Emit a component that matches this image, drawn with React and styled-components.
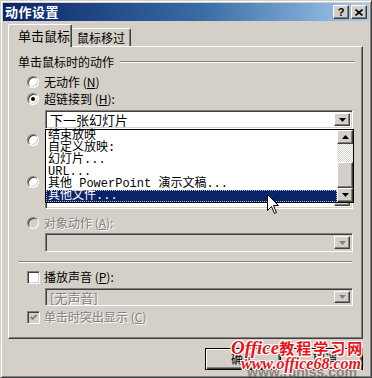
import React from "react";
import styled, { createGlobalStyle, css } from "styled-components";

const face = "#D4D0C8";
const shadow = "#808080";
const dark = "#404040";
const navy = "#0A246A";

const GlobalStyle = createGlobalStyle`
  html, body { margin: 0; padding: 0; background: ${face}; }
  body {
    font-family: "Noto Sans CJK SC", "Liberation Sans", sans-serif;
    font-size: 12px;
    color: #000;
  }
  * { box-sizing: border-box; }
`;

const raised = css`
  border: 1px solid;
  border-color: #fff ${dark} ${dark} #fff;
  box-shadow: inset -1px -1px 0 ${shadow};
`;

const sunken = css`
  border: 1px solid;
  border-color: ${shadow} #fff #fff ${shadow};
  box-shadow: inset 1px 1px 0 ${dark}, inset -1px -1px 0 ${face};
`;

const Window = styled.div`
  position: relative;
  width: 372px;
  height: 378px;
  background: ${face};
  padding: 2px;
  overflow: hidden;
  border: 1px solid;
  border-color: ${face} ${dark} ${dark} ${face};
  box-shadow: inset 1px 1px 0 #fff, inset -1px -1px 0 ${shadow};
`;

const TitleBar = styled.div`
  height: 18px;
  display: flex;
  align-items: center;
  padding: 0 2px;
  background: linear-gradient(to right, ${navy} 0%, #3a6ea5 55%, #a6caf0 100%);
`;

const Title = styled.div`
  flex: 1;
  color: #fff;
  font-weight: bold;
  font-size: 13px;
  line-height: 18px;
  letter-spacing: 0.5px;
`;

const CaptionButton = styled.div`
  width: 16px;
  height: 14px;
  margin-left: ${(p) => p.$gap || 0}px;
  background: ${face};
  ${raised}
  display: flex;
  align-items: center;
  justify-content: center;
  font-family: "Liberation Sans", sans-serif;
  font-weight: bold;
  font-size: 11px;
  line-height: 12px;
`;

const Body = styled.div`
  padding: 3px 6px 0 5px;
`;

const TabStrip = styled.div`
  display: flex;
  align-items: flex-end;
  height: 22px;
  position: relative;
  z-index: 1;
`;

const Tab = styled.div`
  height: ${(p) => (p.$active ? 23 : 18)}px;
  width: ${(p) => p.$width}px;
  margin-bottom: ${(p) => (p.$active ? -1 : 0)}px;
  padding-left: ${(p) => (p.$active ? 9 : 5)}px;
  background: ${face};
  border-top: 1px solid #fff;
  border-left: ${(p) => (p.$active ? "1px solid #fff" : "none")};
  border-right: 1px solid ${dark};
  border-radius: 2px 2px 0 0;
  box-shadow: inset -1px 0 0 ${shadow};
  font-size: ${(p) => (p.$active ? 13 : 12)}px;
  line-height: ${(p) => (p.$active ? 22 : 18)}px;
`;

const Panel = styled.div`
  position: relative;
  width: 355px;
  height: 293px;
  ${raised}
`;

const GroupHeader = styled.div`
  display: flex;
  align-items: center;
  height: 14px;
  margin-top: 8px;
  padding-left: 9px;
  line-height: 14px;
`;

const GroupRule = styled.div`
  flex: 1;
  height: 2px;
  margin: 0 7px 0 6px;
  border-top: 1px solid ${shadow};
  border-bottom: 1px solid #fff;
`;

const OptionRow = styled.div`
  display: flex;
  align-items: center;
  gap: ${(p) => (p.$check ? 4 : 5)}px;
  height: 16px;
  margin-top: ${(p) => p.$top}px;
  padding-left: 18px;
  line-height: 16px;
  color: ${(p) => (p.$disabled ? shadow : "#000")};
  text-shadow: ${(p) => (p.$disabled ? "1px 1px 0 #fff" : "none")};
`;

const Radio = styled.span`
  position: relative;
  width: 12px;
  height: 12px;
  border-radius: 50%;
  background: ${(p) => (p.$disabled ? face : "#fff")};
  border: 1px solid;
  border-color: ${shadow} #fff #fff ${shadow};
  box-shadow: inset 1px 1px 0 ${dark}, inset -1px -1px 0 ${face};
  &::after {
    content: "";
    display: ${(p) => (p.$on ? "block" : "none")};
    position: absolute;
    left: 3px;
    top: 3px;
    width: 4px;
    height: 4px;
    border-radius: 50%;
    background: #000;
  }
`;

const Check = styled.span`
  width: 13px;
  height: 13px;
  display: flex;
  align-items: center;
  justify-content: center;
  background: ${(p) => (p.$disabled ? face : "#fff")};
  ${sunken}
`;

const Field = styled.div`
  display: flex;
  width: 308px;
  height: ${(p) => p.$height || 19}px;
  margin-top: ${(p) => p.$top}px;
  margin-left: 36px;
  padding: 2px;
  background: ${(p) => (p.$disabled ? face : "#fff")};
  ${sunken}
`;

const FieldText = styled.div`
  flex: 1;
  padding-left: 2px;
  line-height: 14px;
  font-size: 13px;
  color: ${(p) => (p.$disabled ? shadow : "#000")};
  text-shadow: ${(p) => (p.$disabled ? "1px 1px 0 #fff" : "none")};
`;

const DropButton = styled.div`
  width: 16px;
  height: 100%;
  display: flex;
  align-items: center;
  justify-content: center;
  background: ${face};
  ${raised}
`;

const Separator = styled.div`
  width: 334px;
  height: 2px;
  margin: 9px 0 0 9px;
  border-top: 1px solid ${shadow};
  border-bottom: 1px solid #fff;
`;

const Popup = styled.div`
  position: absolute;
  left: 36px;
  top: 82px;
  width: 309px;
  height: 74px;
  display: flex;
  border: 1px solid #000;
  background: #fff;
  z-index: 2;
`;

const ItemList = styled.div`
  flex: 1;
`;

const Item = styled.div`
  height: 12px;
  padding-left: 2px;
  font-family: "Liberation Mono", "Noto Sans CJK SC", monospace;
  font-size: 12px;
  line-height: 12px;
  white-space: pre;
  color: ${(p) => (p.$selected ? "#fff" : "#000")};
  background: ${(p) => (p.$selected ? navy : "transparent")};
  outline: ${(p) => (p.$selected ? "1px dotted #c0c0c0" : "none")};
  outline-offset: -1px;
`;

const ScrollBar = styled.div`
  width: 16px;
  display: flex;
  flex-direction: column;
`;

const ScrollArrow = styled.div`
  height: 14px;
  display: flex;
  align-items: center;
  justify-content: center;
  background: ${face};
  ${raised}
`;

const ScrollTrack = styled.div`
  height: ${(p) => p.$size}px;
  background: repeating-conic-gradient(#fff 0 25%, ${face} 0 50%) 0 0 / 2px 2px;
`;

const ScrollThumb = styled.div`
  height: ${(p) => p.$size}px;
  background: ${face};
  ${raised}
`;

const ButtonRow = styled.div`
  display: flex;
  justify-content: flex-end;
  gap: 6px;
  margin-top: 9px;
`;

const PushButton = styled.div`
  width: 76px;
  height: 22px;
  display: flex;
  align-items: center;
  justify-content: center;
  background: ${face};
  border: 1px solid #000;
  box-shadow: inset 1px 1px 0 #fff, inset -1px -1px 0 ${dark}, inset -2px -2px 0 ${shadow};
  line-height: 16px;
`;

const Watermark = styled.div`
  position: absolute;
  left: 230px;
  top: 340px;
  z-index: 5;
  color: #e8141c;
  font-weight: bold;
  line-height: 14px;
  text-shadow: 1px 0 0 #fff, -1px 0 0 #fff, 0 1px 0 #fff, 0 -1px 0 #fff,
    1px 1px 0 #fff, -1px -1px 0 #fff, 1px -1px 0 #fff, -1px 1px 0 #fff;
`;

const MarkLine = styled.div`
  display: flex;
  align-items: baseline;
  padding-left: ${(p) => p.$indent || 0}px;
  height: ${(p) => p.$height}px;
`;

const MarkLatin = styled.span`
  font-family: "Liberation Serif", serif;
  font-style: italic;
  font-size: ${(p) => p.$size}px;
`;

const MarkCjk = styled.span`
  font-size: 15px;
  letter-spacing: 2px;
`;

const GhostMark = styled.div`
  position: absolute;
  left: 246px;
  top: 363px;
  z-index: 4;
  font-family: "Liberation Sans", sans-serif;
  font-size: 14px;
  font-weight: bold;
  color: rgba(70, 70, 70, 0.55);
`;

const Cursor = styled.svg`
  position: absolute;
  left: 266px;
  top: 193px;
  z-index: 6;
`;

const Arrow = ({ up, disabled }) => (
  <svg width="7" height="4" viewBox="0 0 7 4">
    <polygon
      points={up ? "3.5,0 7,4 0,4" : "0,0 7,0 3.5,4"}
      fill={disabled ? shadow : "#000"}
    />
  </svg>
);

const Combo = ({ text, disabled, top, height }) => (
  <Field $disabled={disabled} $top={top} $height={height}>
    <FieldText $disabled={disabled}>{text}</FieldText>
    <DropButton>
      <Arrow disabled={disabled} />
    </DropButton>
  </Field>
);

const items = [
  "结束放映",
  "自定义放映:",
  "幻灯片...",
  "URL...",
  "其他 PowerPoint 演示文稿...",
  "其他文件...",
];

export default function App() {
  return (
    <>
      <GlobalStyle />
      <Window>
        <TitleBar>
          <Title>动作设置</Title>
          <CaptionButton>?</CaptionButton>
          <CaptionButton $gap={2}>
            <svg width="8" height="7" viewBox="0 0 8 7">
              <path d="M0.5 0.5 L7.5 6.5 M7.5 0.5 L0.5 6.5" stroke="#000" strokeWidth="1.6" />
            </svg>
          </CaptionButton>
        </TitleBar>

        <Body>
          <TabStrip>
            <Tab $active $width={64}>单击鼠标</Tab>
            <Tab $width={59}>鼠标移过</Tab>
          </TabStrip>

          <Panel>
            <GroupHeader>
              单击鼠标时的动作
              <GroupRule />
            </GroupHeader>

            <OptionRow $top={5}>
              <Radio />
              <span>无动作 (<u>N</u>)</span>
            </OptionRow>
            <OptionRow $top={1}>
              <Radio $on />
              <span>超链接到 (<u>H</u>):</span>
            </OptionRow>
            <Combo text="下一张幻灯片" top={3} />

            <OptionRow $top={3}>
              <Radio />
            </OptionRow>
            <Combo text="" top={2} />
            <OptionRow $top={5}>
              <Radio />
            </OptionRow>
            <Combo text="" top={0} />

            <OptionRow $top={6} $disabled>
              <Radio $disabled />
              <span>对象动作 (<u>A</u>):</span>
            </OptionRow>
            <Combo text="" disabled top={2} />

            <Separator />

            <OptionRow $top={6} $check>
              <Check />
              <span>播放声音 (<u>P</u>):</span>
            </OptionRow>
            <Combo text="[无声音]" disabled top={3} height={18} />
            <OptionRow $top={3} $check $disabled>
              <Check $disabled>
                <svg width="7" height="7" viewBox="0 0 7 7">
                  <path d="M0.5 3 L2.5 5 L6.5 1" stroke={shadow} strokeWidth="1.8" fill="none" />
                </svg>
              </Check>
              <span>单击时突出显示 (<u>C</u>)</span>
            </OptionRow>

            <Popup>
              <ItemList>
                {items.map((t, i) => (
                  <Item key={t} $selected={i === items.length - 1}>
                    {t}
                  </Item>
                ))}
              </ItemList>
              <ScrollBar>
                <ScrollArrow>
                  <Arrow up />
                </ScrollArrow>
                <ScrollTrack $size={18} />
                <ScrollThumb $size={26} />
                <ScrollArrow>
                  <Arrow />
                </ScrollArrow>
              </ScrollBar>
            </Popup>
          </Panel>

          <ButtonRow>
            <PushButton>确定</PushButton>
            <PushButton>取消</PushButton>
          </ButtonRow>
        </Body>

        <GhostMark>www.ranjss.com</GhostMark>
        <Watermark>
          <MarkLine $height={16}>
            <MarkLatin $size={19}>Office</MarkLatin>
            <MarkCjk>教程学习网</MarkCjk>
          </MarkLine>
          <MarkLine $height={14} $indent={10}>
            <MarkLatin $size={16}>www.office68.com</MarkLatin>
          </MarkLine>
        </Watermark>

        <Cursor width="13" height="21" viewBox="0 0 13 21">
          <path
            d="M0.5 0.5 L0.5 16.5 L4.5 12.5 L7.5 19.5 L9.5 18.5 L6.5 11.5 L11.5 11.5 Z"
            fill="#fff"
            stroke="#000"
            strokeWidth="1"
          />
        </Cursor>
      </Window>
    </>
  );
}
